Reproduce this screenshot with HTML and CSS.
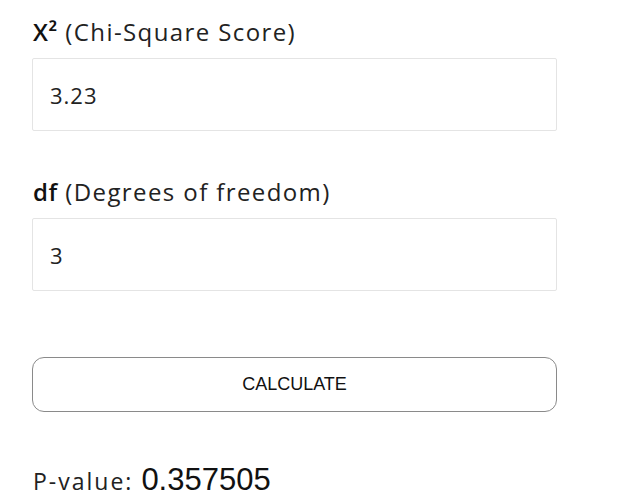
FILE: index.html
```html
<!DOCTYPE html>
<html>
<head>
<meta charset="utf-8">
<link rel="stylesheet" href="styles.css">
</head>
<body>
<div class="calc">
  <div class="field">
    <label class="label"><span class="sym">X²</span> (Chi-Square Score)</label>
    <div class="input">3.23</div>
  </div>
  <div class="field">
    <label class="label"><span class="sym">df</span> (Degrees of freedom)</label>
    <div class="input">3</div>
  </div>
  <button class="btn">CALCULATE</button>
  <div class="result"><span class="rlabel">P-value:</span> <span class="rval">0.357505</span></div>
</div>
</body>
</html>
```
FILE: styles.css
```css
html, body { margin: 0; padding: 0; background: #fff; }
body { font-family: "Open Sans", "Lato", sans-serif; color: #222; }
.calc { width: 525px; padding: 16px 0 0 32px; display: flex; flex-direction: column; }
.field { display: flex; flex-direction: column; margin-bottom: 45px; }
.label { font-size: 24px; line-height: 32px; letter-spacing: 1.4px; color: #222; padding-left: 1px; }
.sym { font-weight: 600; color: #111; letter-spacing: 0.5px; }
.input { margin-top: 10px; height: 71px; border: 1px solid #e4e4e4; border-radius: 2px; box-sizing: content-box; padding-left: 17px; display: flex; align-items: center; font-size: 22px; letter-spacing: 1px; color: #222; }
.btn { margin-top: 21px; height: 55px; border: 1px solid #8a8a8a; border-radius: 12px; background: #fff; font-family: "Liberation Sans", Arial, sans-serif; font-size: 18px; color: #111; padding: 0; }
.result { margin-top: 50px; padding-left: 1px; display: flex; align-items: baseline; gap: 8px; }
.rlabel { font-size: 23px; letter-spacing: 2px; color: #222; }
.rval { font-family: "Liberation Sans", Arial, sans-serif; font-size: 31px; color: #111; }
```
